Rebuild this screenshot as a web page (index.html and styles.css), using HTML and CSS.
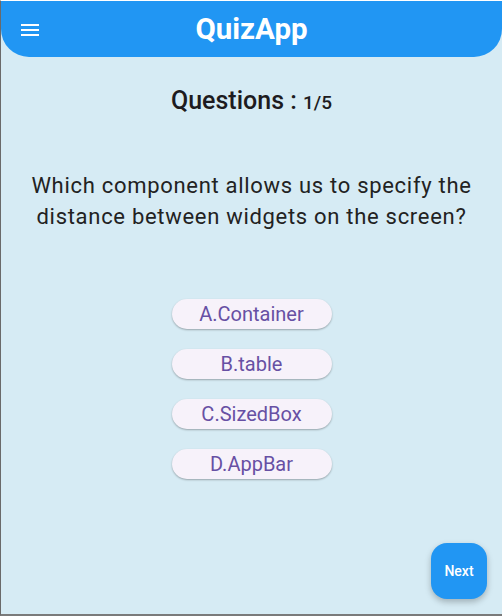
FILE: index.html
```html
<!DOCTYPE html>
<html>
<head>
<meta charset="utf-8">
<link rel="stylesheet" href="styles.css">
</head>
<body>
<div class="frame">
  <header class="appbar">
    <span class="menu" aria-label="menu">
      <svg width="18" height="12" viewBox="0 0 18 12"><rect x="0" y="0" width="18" height="2" fill="#fff"/><rect x="0" y="5" width="18" height="2" fill="#fff"/><rect x="0" y="10" width="18" height="2" fill="#fff"/></svg>
    </span>
    <h1 class="title">QuizApp</h1>
  </header>
  <main class="content">
    <div class="counter"><span class="label">Questions : </span><span class="num">1/5</span></div>
    <p class="question">Which component allows us to specify the distance between widgets on the screen?</p>
    <div class="options">
      <button class="opt">A.Container</button>
      <button class="opt">B.table</button>
      <button class="opt">C.SizedBox</button>
      <button class="opt">D.AppBar</button>
    </div>
  </main>
  <button class="fab">Next</button>
</div>
</body>
</html>
```
FILE: styles.css
```css
html, body { margin: 0; padding: 0; }
body { width: 502px; height: 616px; overflow: hidden; background: #fff; font-family: Roboto, "Noto Sans", sans-serif; }
.frame {
  position: relative;
  box-sizing: border-box;
  width: 502px;
  height: 616px;
  border-top: 1px solid #fff;
  border-left: 1px solid #6a6a6a;
  border-bottom: 2px solid #7a7a7a;
  background: #d6ebf4;
}
.appbar {
  height: 56px;
  background: #2196f3;
  border-radius: 0 0 28px 28px;
  display: flex;
  align-items: center;
  justify-content: center;
  position: relative;
}
.menu { position: absolute; left: 20px; top: 23px; display: block; line-height: 0; }
.title { margin: 0; color: #fff; font-size: 29.5px; font-weight: 700; letter-spacing: 0; }
.content { display: flex; flex-direction: column; align-items: center; }
.counter { margin-top: 28px; color: #1d1b20; line-height: 32px; }
.label { font-size: 25px; font-weight: 500; }
.num { font-size: 19px; font-weight: 500; }
.question {
  margin: 50px 0 0;
  width: 480px;
  text-align: center;
  font-size: 22px;
  letter-spacing: 0.7px;
  line-height: 31px;
  color: #222;
}
.options { margin-top: 67px; display: flex; flex-direction: column; gap: 20px; }
.opt {
  width: 160px;
  height: 30px;
  border: none;
  border-radius: 15px;
  background: #f7f2fa;
  color: #6750a4;
  font-family: Roboto, sans-serif;
  font-size: 20px;
  padding: 0;
  box-shadow: 0 1px 2px rgba(0,0,0,0.3);
}
.fab {
  position: absolute;
  left: 430px;
  top: 542px;
  width: 56px;
  height: 56px;
  border: none;
  border-radius: 16px;
  background: #2196f3;
  color: #fff;
  font-family: Roboto, sans-serif;
  font-size: 14px;
  font-weight: 500;
  box-shadow: 0 3px 6px rgba(0,0,0,0.25);
}
```
